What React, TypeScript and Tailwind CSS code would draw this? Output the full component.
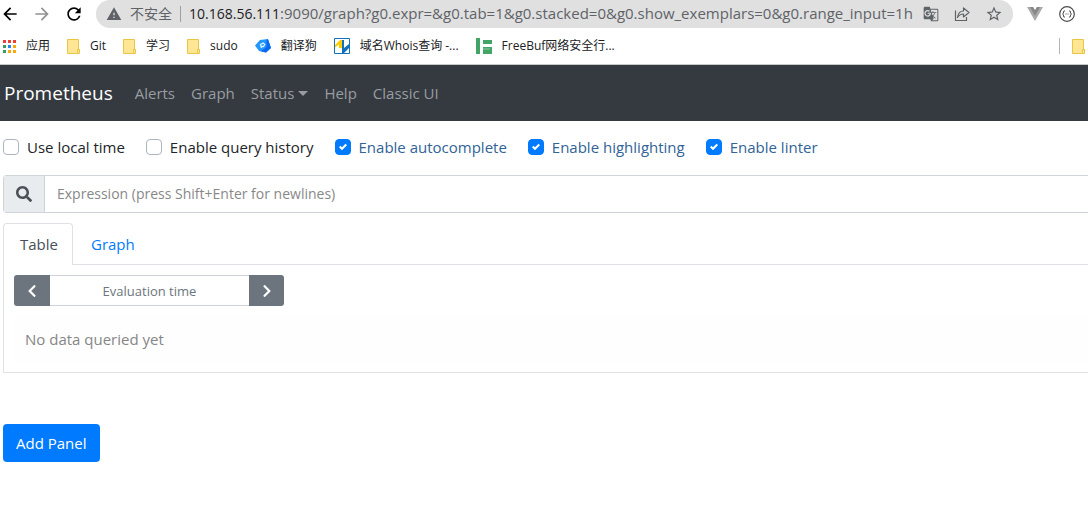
import { useState } from 'react';
import type { ReactNode } from 'react';
import { MdArrowBack, MdArrowForward, MdRefresh, MdStarBorder, MdWarning, MdGTranslate } from 'react-icons/md';
import { FaChevronLeft, FaChevronRight, FaSearch } from 'react-icons/fa';

function FolderIcon() {
  return (
    <svg viewBox="0 0 13 15" className="h-[15px] w-[13px] shrink-0" aria-hidden="true">
      <path d="M.5.5h11v10h1v4H.5z" fill="#ffe694" stroke="#e8c545" />
      <path d="M10.5 13.5v-3h2" fill="none" stroke="#e8c545" />
    </svg>
  );
}

function AppsIcon() {
  const colors = ['#ea4335', '#ea4335', '#ea4335', '#34a05c', '#2a85f0', '#f5a90c', '#34a05c', '#f5a90c', '#f5a90c'];
  return (
    <svg viewBox="0 0 13 13" className="size-[13px] shrink-0" aria-hidden="true">
      {colors.map((c, i) => (
        <rect key={i} x={(i % 3) * 5} y={Math.floor(i / 3) * 5} width="3" height="3" fill={c} />
      ))}
    </svg>
  );
}

function TranslateDogIcon() {
  return (
    <svg viewBox="0 0 16 16" className="size-4 shrink-0" aria-hidden="true">
      <path d="M0 7.500 5 2l8-1 3 9-5 4.500-7-1.500z" fill="#1f97ff" />
      <path d="m11.500 1.500 1.500 0 3 8.500-5 4.500-5-1.200 5.500-4.300z" fill="#0b66f0" />
      <path d="M6.500 10 5.500 6.500 8 5l1.800 1.500L8.500 8.500 6.200 8.300" fill="none" stroke="#d9efff" strokeWidth="1.300" />
    </svg>
  );
}

function WhoisIcon() {
  return (
    <svg viewBox="0 0 16 16" className="size-4 shrink-0" aria-hidden="true">
      <path d="M.5.5h15v15H.5z" fill="#fff" stroke="#1470b8" />
      <path d="M1 7 6 2h2v8H5V6.500L1 9.500z" fill="#fc0" />
      <path d="M8 2h2v8l5-4v4l-5 5H8z" fill="#1470b8" />
    </svg>
  );
}

function FreeBufIcon() {
  return (
    <svg viewBox="0 0 16 16" className="size-4 shrink-0" aria-hidden="true">
      <path d="M0 0h4v16H0zM7 2h9v4H7zM7 9h9v7H7z" fill="#42a566" />
      <path d="M7 11h7" stroke="#8dcaa2" />
    </svg>
  );
}

function ShareIcon() {
  return (
    <svg viewBox="0 0 16 16" className="size-4" fill="none" stroke="currentColor" strokeWidth="1.200" aria-hidden="true">
      <path d="M1.500 4.500v10h11V11" />
      <path d="M9.500 2v3C6 5 4 7.500 3.500 11.500 5 9 7 8 9.500 8v3L15 6.500z" strokeLinejoin="round" />
    </svg>
  );
}

function VueIcon() {
  return (
    <svg viewBox="0 0 16 14" className="h-[14px] w-4" aria-hidden="true">
      <path d="M0 0h6l2 3 2-3h6L8 14z" fill="#aaa" />
      <path d="M3 0h3l2 3.500L10 0h3L8 9z" fill="#888" />
    </svg>
  );
}

function JsonIcon() {
  return (
    <svg viewBox="0 0 16 16" className="size-4" fill="none" stroke="#4a4a4a" aria-hidden="true">
      <circle cx="8" cy="8" r="7.300" strokeWidth="1.200" />
      <path d="M6 5H5q-.5 0-.5 1v1L3.500 8l1 1v1q0 1 .5 1h1M10 5h1q.5 0 .5 1v1l1 1-1 1v1q0 1-.5 1h-1" />
      <path d="M6.500 8h1M8.500 8h1" />
    </svg>
  );
}

function Bookmark({ icon, children }: { icon: ReactNode; children: ReactNode }) {
  return (
    <a href="#" className="flex shrink-0 items-center gap-2.5">
      {icon}
      <span>{children}</span>
    </a>
  );
}

function BrowserBar() {
  return (
    <header className="border-b border-[#c8c8c8] bg-white font-['Open_Sans','Noto_Sans_CJK_SC',sans-serif]">
      <div className="flex h-7 items-center">
        <div className="flex w-24 shrink-0 items-center gap-3">
          <button aria-label="Back" className="text-black"><MdArrowBack size={20} /></button>
          <button aria-label="Forward" className="text-[#929292]"><MdArrowForward size={20} /></button>
          <button aria-label="Reload" className="text-black"><MdRefresh size={20} /></button>
        </div>
        <div className="flex h-7 min-w-0 flex-1 items-center rounded-full bg-[#e0e0e0] px-2.5 text-sm text-[#5f6368]">
          <MdWarning size={16} className="shrink-0" />
          <span className="ml-2 shrink-0">不安全</span>
          <span className="mx-2 h-4 w-px shrink-0 bg-[#a0a0a0]" />
          <div role="textbox" aria-label="Address" className="min-w-0 flex-1 overflow-hidden text-[15px] whitespace-nowrap">
            <span className="text-sm text-[#202124]">10.168.56.111</span>
            :9090/graph?g0.expr=&amp;g0.tab=1&amp;g0.stacked=0&amp;g0.show_exemplars=0&amp;g0.range_input=1h
          </div>
          <div className="ml-2 flex shrink-0 items-center gap-[15px]">
            <button aria-label="Translate"><MdGTranslate size={16} /></button>
            <button aria-label="Share"><ShareIcon /></button>
            <button aria-label="Bookmark this page"><MdStarBorder size={18} /></button>
          </div>
        </div>
        <div className="flex shrink-0 items-center gap-4 pr-[13px] pl-3.5">
          <button aria-label="Vue devtools"><VueIcon /></button>
          <button aria-label="JSON viewer"><JsonIcon /></button>
        </div>
      </div>
      <div className="flex h-9 items-center justify-between pl-[3px] text-xs text-[#202124]">
        <nav aria-label="Bookmarks" className="flex items-center gap-[17px]">
          <Bookmark icon={<AppsIcon />}>应用</Bookmark>
          <Bookmark icon={<FolderIcon />}>Git</Bookmark>
          <Bookmark icon={<FolderIcon />}>学习</Bookmark>
          <Bookmark icon={<FolderIcon />}>sudo</Bookmark>
          <Bookmark icon={<TranslateDogIcon />}>翻译狗</Bookmark>
          <Bookmark icon={<WhoisIcon />}>域名Whois查询 -...</Bookmark>
          <Bookmark icon={<FreeBufIcon />}>FreeBuf网络安全行...</Bookmark>
        </nav>
        <button aria-label="Other bookmarks" className="flex shrink-0 items-center gap-3 pr-[3px]">
          <span className="h-4 w-px bg-[#b5b5b5]" />
          <FolderIcon />
        </button>
      </div>
    </header>
  );
}

function Option({ label, initial = false }: { label: string; initial?: boolean }) {
  const [checked, setChecked] = useState(initial);
  return (
    <label className={checked ? 'flex items-center gap-2 text-[#316396]' : 'flex items-center gap-2 text-[#212529]'}>
      <span className="grid size-4 place-items-center">
        <input
          type="checkbox"
          checked={checked}
          onChange={(e) => setChecked(e.target.checked)}
          className="col-start-1 row-start-1 size-4 appearance-none rounded border border-[#adb5bd] bg-white checked:border-[#007bff] checked:bg-[#007bff]"
        />
        {checked && (
          <svg viewBox="0 0 8 8" className="pointer-events-none col-start-1 row-start-1 size-2" aria-hidden="true">
            <path fill="#fff" d="M6.564.75l-3.590 3.612-1.538-1.550L0 4.260l2.974 2.990L8 2.193z" />
          </svg>
        )}
      </span>
      <span>{label}</span>
    </label>
  );
}

export default function App() {
  return (
    <div className="min-h-screen overflow-x-hidden bg-white font-['Open_Sans','Noto_Sans_CJK_SC',sans-serif] text-[15px] leading-6 text-[#212529]">
      <BrowserBar />
      <nav className="flex h-14 items-center bg-[#343a40] pl-1 text-[#9a9da0]">
        <a href="#" className="mr-[22px] text-[19px] text-white">Prometheus</a>
        <div className="flex items-center gap-4">
          <a href="#">Alerts</a>
          <a href="#">Graph</a>
          <button className="flex items-center gap-1">
            Status
            <svg viewBox="0 0 10 5" className="h-[5px] w-2.5" aria-hidden="true"><path d="M0 0h10L5 5z" fill="currentColor" /></svg>
          </button>
          <a href="#">Help</a>
          <a href="#">Classic UI</a>
        </div>
      </nav>
      <main className="pl-[3px]">
        <div className="flex items-center gap-[21px] pt-3.5 pb-4">
          <Option label="Use local time" />
          <Option label="Enable query history" />
          <Option label="Enable autocomplete" initial />
          <Option label="Enable highlighting" initial />
          <Option label="Enable linter" initial />
        </div>
        <label className="flex h-[38px] rounded-l border border-r-0 border-[#ced4da]">
          <span className="flex w-[41px] shrink-0 items-center justify-center border-r border-[#ced4da] bg-[#e9ecef] text-[#495057]">
            <FaSearch size={16} />
          </span>
          <input
            aria-label="Expression"
            placeholder="Expression (press Shift+Enter for newlines)"
            className="min-w-0 flex-1 px-3 text-sm outline-none placeholder:text-[#888]"
          />
        </label>
        <div role="tablist" className="mt-2.5 flex border-b border-[#dee2e6]">
          <button role="tab" aria-selected="true" className="-mb-px h-[42px] rounded-t border border-b-0 border-[#dee2e6] bg-white pr-3.5 pb-px pl-4 text-[#495057]">
            Table
          </button>
          <button role="tab" aria-selected="false" className="ml-0.5 h-[41px] pr-3.5 pl-4 text-[#007bff]">Graph</button>
        </div>
        <section className="border-b border-l border-[#dee2e6] py-2.5 pl-2.5">
          <div className="flex h-[31px] w-[270px] text-white">
            <button aria-label="Decrease time" className="flex w-9 items-center justify-center rounded-l-[3px] bg-[#6c757d]"><FaChevronLeft size={14} /></button>
            <input
              aria-label="Evaluation time"
              placeholder="Evaluation time"
              className="min-w-0 flex-1 border-y border-[#ced4da] text-center text-[13px] text-[#495057] outline-none placeholder:text-[#6c757d]"
            />
            <button aria-label="Increase time" className="flex w-[35px] items-center justify-center rounded-r-[3px] bg-[#6c757d]"><FaChevronRight size={14} /></button>
          </div>
          <p className="mt-2.5 rounded-l bg-[#fefefe] py-[11px] pl-[11px] text-[#868686]">No data queried yet</p>
        </section>
        <button className="mt-[51px] h-[38px] rounded bg-[#007bff] px-[13px] text-white">Add Panel</button>
      </main>
    </div>
  );
}
